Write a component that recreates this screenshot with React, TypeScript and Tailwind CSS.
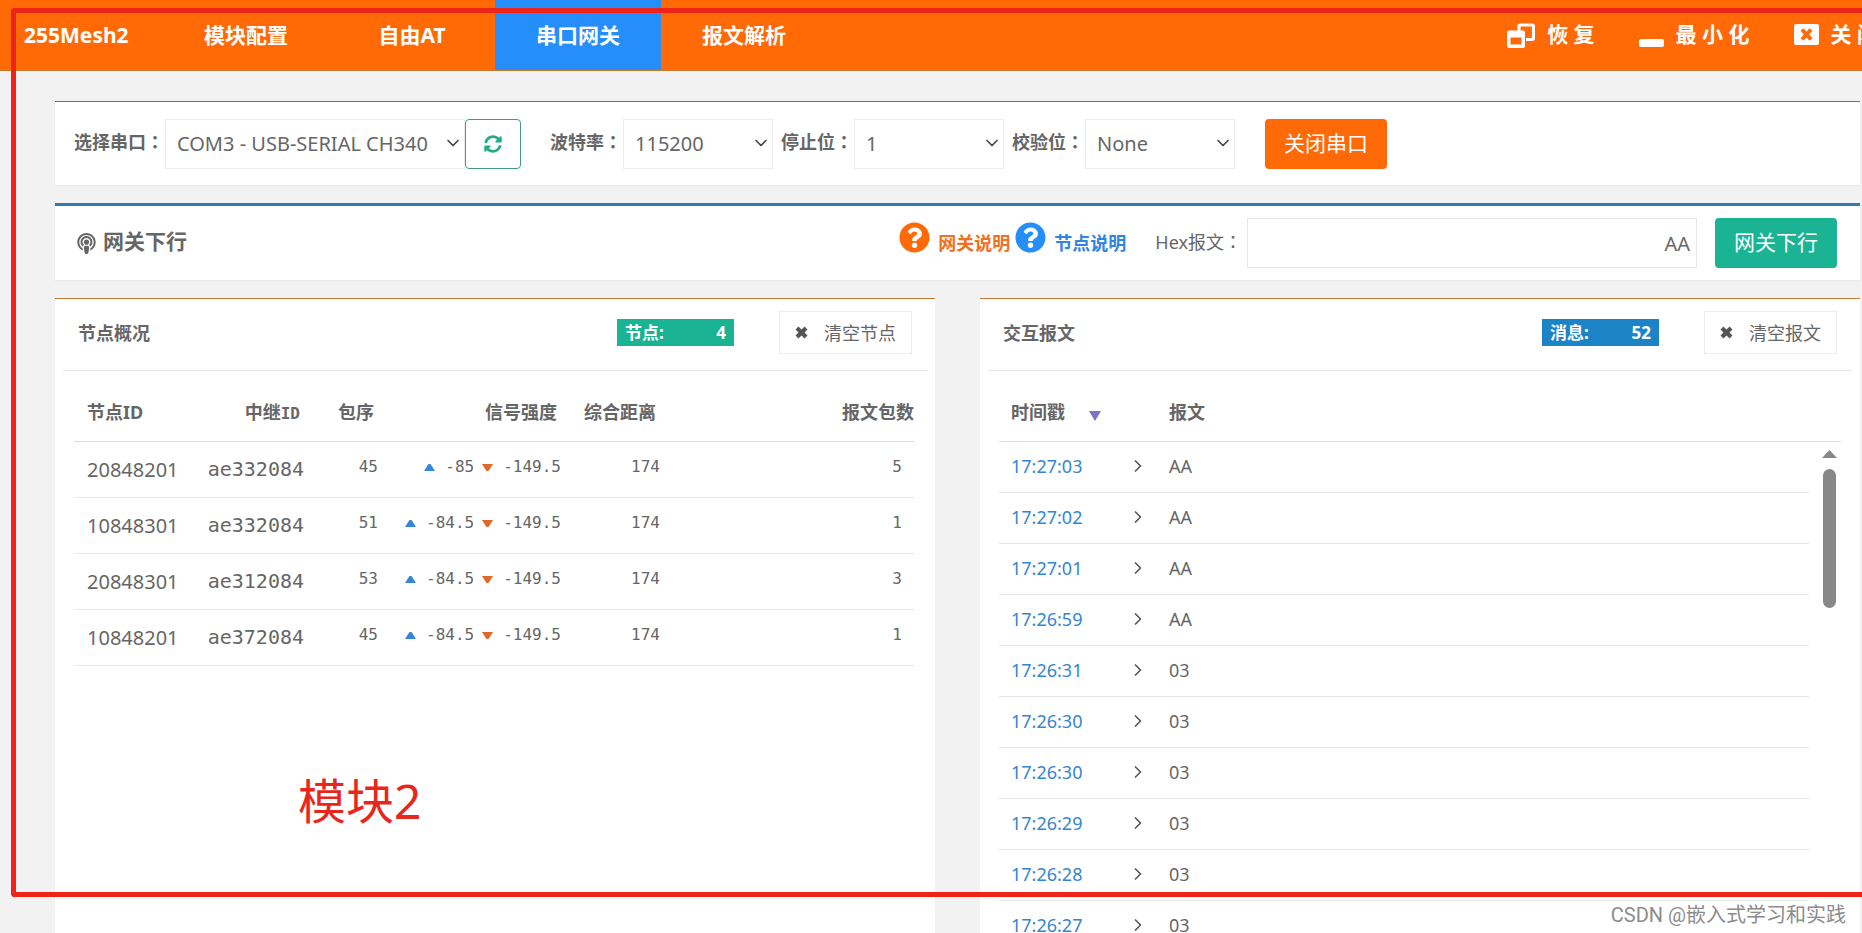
import React from "react";
import { FaPodcast, FaQuestionCircle, FaSyncAlt } from "react-icons/fa";
import { ChevronDown, ChevronRight } from "lucide-react";

const tabs = ["模块配置", "自由AT", "串口网关", "报文解析"];

const nodes = [
  { id: "20848201", relay: "ae332084", seq: 45, up: "-85", down: "-149.5", distance: 174, count: 5 },
  { id: "10848301", relay: "ae332084", seq: 51, up: "-84.5", down: "-149.5", distance: 174, count: 1 },
  { id: "20848301", relay: "ae312084", seq: 53, up: "-84.5", down: "-149.5", distance: 174, count: 3 },
  { id: "10848201", relay: "ae372084", seq: 45, up: "-84.5", down: "-149.5", distance: 174, count: 1 },
];

const messages = [
  { time: "17:27:03", data: "AA" },
  { time: "17:27:02", data: "AA" },
  { time: "17:27:01", data: "AA" },
  { time: "17:26:59", data: "AA" },
  { time: "17:26:31", data: "03" },
  { time: "17:26:30", data: "03" },
  { time: "17:26:30", data: "03" },
  { time: "17:26:29", data: "03" },
  { time: "17:26:28", data: "03" },
  { time: "17:26:27", data: "03" },
];

const RestoreIcon = () => (
  <svg width="28" height="25" viewBox="0 0 28 25" fill="none">
    <path d="M12 8V3.5Q12 2 13.500 2H25Q26.500 2 26.500 3.500V15Q26.500 16.500 25 16.500H19" stroke="white" strokeWidth="3.200" />
    <path
      fillRule="evenodd"
      fill="white"
      d="M2 7.500H16Q18 7.500 18 9.500V23Q18 25 16 25H2Q0 25 0 23V9.500Q0 7.500 2 7.500ZM3.500 14.500V21.500H14.500V14.500Z"
    />
  </svg>
);

const MinimizeIcon = () => (
  <svg width="25" height="25" viewBox="0 0 25 25">
    <rect y="16" width="25" height="8" rx="2" fill="white" />
  </svg>
);

const CloseIcon = () => (
  <svg width="25" height="25" viewBox="0 0 25 25">
    <rect y="1" width="25" height="21" rx="2" fill="white" />
    <path d="M8 6.500L17 16.500M17 6.500L8 16.500" stroke="#ff6a06" strokeWidth="4" />
  </svg>
);

const CrossIcon = () => (
  <svg width="13" height="13" viewBox="0 0 13 13">
    <path d="M2 2L11 11M11 2L2 11" stroke="#555" strokeWidth="4.200" />
  </svg>
);

const Label = ({ htmlFor, text, bold = true }: { htmlFor: string; text: string; bold?: boolean }) => (
  <label htmlFor={htmlFor} className={bold ? "mr-px shrink-0 pb-1 text-lg font-bold" : "mr-px shrink-0 pb-1 text-lg"}>
    {text}
    <span className="font-['Noto_Sans_CJK_TC',sans-serif]">：</span>
  </label>
);

const Select = ({ id, value, width }: { id: string; value: string; width: string }) => (
  <div className={`relative shrink-0 ${width}`}>
    <select
      id={id}
      className="h-[50px] w-full appearance-none border border-[#ececec] bg-white pl-[11px] text-xl text-[#666]"
    >
      <option>{value}</option>
    </select>
    <ChevronDown className="pointer-events-none absolute right-0.5 top-3.5 h-5 w-5 text-[#444]" strokeWidth={2} />
  </div>
);

const PanelHead = ({
  title,
  badge,
  count,
  badgeColor,
  action,
}: {
  title: string;
  badge: string;
  count: number;
  badgeColor: string;
  action: string;
}) => (
  <div className="mx-2 flex h-[72px] items-center border-b border-[#e7e7e7] px-[15px] pb-1">
    <h2 className="flex-1 text-lg font-bold">{title}</h2>
    <div className={`flex h-[27px] w-[117px] items-center justify-between px-2 text-[17px] font-bold text-white ${badgeColor}`}>
      <span>{badge}</span>
      <span>{count}</span>
    </div>
    <button className="ml-[45px] flex h-[43px] w-[133px] items-center justify-center gap-4 whitespace-nowrap border border-[#ececec] text-lg">
      <CrossIcon />
      {action}
    </button>
  </div>
);

const App: React.FC = () => {
  return (
    <div className="relative flex h-screen flex-col overflow-hidden bg-[#f2f2f2] font-['Noto_Sans','Noto_Sans_CJK_SC',sans-serif] text-[#666]">
      <header className="flex h-[71px] shrink-0 overflow-hidden border-b border-[#c8772c] bg-[#ff6a06] text-[21px] font-bold text-white">
        <div className="w-[163px] pl-6 leading-[70px]">255Mesh2</div>
        <nav className="flex flex-1">
          {tabs.map((tab) => (
            <a
              key={tab}
              href="#"
              className={`w-[166px] text-center leading-[70px] ${tab === "串口网关" ? "bg-[#258efb]" : ""}`}
            >
              {tab}
            </a>
          ))}
        </nav>
        <div className="-mr-4 flex shrink-0 items-center gap-11 whitespace-nowrap">
          <button className="flex items-center gap-3">
            <RestoreIcon />恢 复
          </button>
          <button className="flex items-center gap-3">
            <MinimizeIcon />最 小 化
          </button>
          <button className="flex items-center gap-3">
            <CloseIcon />关 闭
          </button>
        </div>
      </header>

      <main className="flex flex-1 flex-col gap-[18px] pl-[55px] pr-[2px] pt-[30px]">
        <section className="flex h-[84px] shrink-0 items-center border-t border-[#3c7fa8] bg-white pl-[19px] shadow-xs">
          <Label htmlFor="port" text="选择串口" />
          <Select id="port" value="COM3 - USB-SERIAL CH340" width="w-[300px]" />
          <button
            aria-label="刷新"
            className="mr-[29px] flex h-[50px] w-14 shrink-0 items-center justify-center rounded border border-[#3f9d86]"
          >
            <FaSyncAlt className="h-[18px] w-[18px] text-[#22ad88]" />
          </button>
          <Label htmlFor="baud" text="波特率" />
          <Select id="baud" value="115200" width="w-[150px] mr-2" />
          <Label htmlFor="stop" text="停止位" />
          <Select id="stop" value="1" width="w-[150px] mr-2" />
          <Label htmlFor="parity" text="校验位" />
          <Select id="parity" value="None" width="w-[150px]" />
          <button className="ml-[30px] h-[50px] w-[122px] shrink-0 rounded bg-[#ff6a06] text-[21px] text-white">
            关闭串口
          </button>
        </section>

        <section className="flex h-[77px] shrink-0 items-center border-t-[3px] border-[#2f7db0] bg-white pl-[22px] pr-[23px] shadow-xs">
          <FaPodcast className="mr-[7px] h-[21px] w-[19px]" />
          <h1 className="flex-1 pb-0.5 text-[21px] font-bold">网关下行</h1>
          <a href="#" className="mr-[5px] flex items-center gap-2 text-lg font-bold text-[#f07020]">
            <FaQuestionCircle className="mb-3 h-[31px] w-[31px] text-[#ff6a06]" />
            网关说明
          </a>
          <a href="#" className="mr-[29px] flex items-center gap-2 text-lg font-bold text-[#2f86e0]">
            <FaQuestionCircle className="mb-3 h-[31px] w-[31px] text-[#258efb]" />
            节点说明
          </a>
          <Label htmlFor="hex" text="Hex报文" bold={false} />
          <input
            id="hex"
            defaultValue="AA"
            className="ml-1 mr-[18px] h-[50px] w-[450px] border border-[#e6e6ea] bg-white px-[6px] text-right text-xl"
          />
          <button className="h-[50px] w-[122px] shrink-0 rounded bg-[#1ab394] text-[21px] text-white">网关下行</button>
        </section>

        <div className="grid flex-1 grid-cols-2 gap-[45px]">
          <section className="border-t border-[#c27a35] bg-white">
            <PanelHead title="节点概况" badge="节点:" count={4} badgeColor="bg-[#1ab394]" action="清空节点" />
            <div className="pl-[19px] pr-[21px]">
              <table className="w-full table-fixed">
                <colgroup>
                  <col className="w-[121px]" />
                  <col className="w-[121px]" />
                  <col className="w-[74px]" />
                  <col className="w-[183px]" />
                  <col className="w-[99px]" />
                  <col />
                </colgroup>
                <thead>
                  <tr className="h-[70px] border-b border-[#dcdcdc] text-right text-lg font-bold">
                    <th className="pl-[13px] pt-3 text-left">节点ID</th>
                    <th className="pr-4 pt-3">
                      中继<span className="font-['DejaVu_Sans_Mono',monospace] text-base">ID</span>
                    </th>
                    <th className="pr-4 pt-3">包序</th>
                    <th className="pr-4 pt-3">信号强度</th>
                    <th className="pr-4 pt-3">综合距离</th>
                    <th className="pt-3">报文包数</th>
                  </tr>
                </thead>
                <tbody className="font-['DejaVu_Sans_Mono',monospace] text-base">
                  {nodes.map((node) => (
                    <tr key={node.id} className="h-14 border-b border-[#e7e7e7] text-right">
                      <td className="pl-[13px] pt-0.5 text-left font-['Noto_Sans',sans-serif] text-xl">{node.id}</td>
                      <td className="pr-3 text-xl">{node.relay}</td>
                      <td className="pb-1 pr-3">{node.seq}</td>
                      <td className="pb-1 pr-3">
                        <div className="flex items-center justify-end">
                          <svg width="11" height="7" viewBox="0 0 11 7" className="mr-[10px]">
                            <path d="M0 7L4.500 0H6.500L11 7Z" fill="#3586df" />
                          </svg>
                          {node.up}
                          <svg width="11" height="7" viewBox="0 0 11 7" className="ml-2 mr-[10px]">
                            <path d="M0 0H11L6.500 7H4.500Z" fill="#e0692a" />
                          </svg>
                          {node.down}
                        </div>
                      </td>
                      <td className="pb-1 pr-3">{node.distance}</td>
                      <td className="pb-1 pr-3">{node.count}</td>
                    </tr>
                  ))}
                </tbody>
              </table>
            </div>
          </section>

          <section className="border-t border-[#c27a35] bg-white">
            <PanelHead title="交互报文" badge="消息:" count={52} badgeColor="bg-[#1c84c6]" action="清空报文" />
            <div className="relative pl-[19px] pr-[19px]">
              <table className="w-full table-fixed text-left text-lg">
                <colgroup>
                  <col className="w-[157px]" />
                  <col />
                  <col className="w-8" />
                </colgroup>
                <thead>
                  <tr className="h-[70px] border-b border-[#dcdcdc]">
                    <th className="pl-3 pt-3">
                      <div className="flex items-center gap-6">
                        时间戳
                        <svg width="12" height="10" viewBox="0 0 12 10" className="mt-2">
                          <path d="M0 0H12L6 10Z" fill="#7f70cc" />
                        </svg>
                      </div>
                    </th>
                    <th className="pl-[13px] pt-3">报文</th>
                    <th />
                  </tr>
                </thead>
                <tbody>
                  {messages.map((message, index) => (
                    <tr key={index} className="h-[51px]">
                      <td className="border-b border-[#e7e7e7] pb-0.5 pl-3 pr-2">
                        <div className="flex items-center justify-between text-[#3586cf]">
                          {message.time}
                          <ChevronRight className="h-5 w-5 text-[#555]" strokeWidth={2} />
                        </div>
                      </td>
                      <td className="border-b border-[#e7e7e7] pb-0.5 pl-[13px]">{message.data}</td>
                      <td />
                    </tr>
                  ))}
                </tbody>
              </table>
              {/* scrollbar */}
              <div className="absolute right-[23px] top-[79px] flex flex-col items-center gap-[11px]">
                <svg width="15" height="8" viewBox="0 0 15 8">
                  <path d="M0 8L7.500 0L15 8Z" fill="#888" />
                </svg>
                <div className="h-[139px] w-[13px] rounded-full bg-[#888]" />
              </div>
            </div>
          </section>
        </div>
      </main>

      <div className="pointer-events-none absolute bottom-9 left-[11px] right-0 top-2 rounded-l border-[5px] border-r-0 border-[#ee2418]" />
      <div className="absolute left-[298px] top-[765px] text-5xl leading-[72px] text-[#e8261c]">模块2</div>
      <div className="absolute bottom-1 right-4 font-['Roboto','Noto_Sans_CJK_SC',sans-serif] text-xl text-[#8c8c8c]">
        CSDN @嵌入式学习和实践
      </div>
    </div>
  );
};

export default App;
